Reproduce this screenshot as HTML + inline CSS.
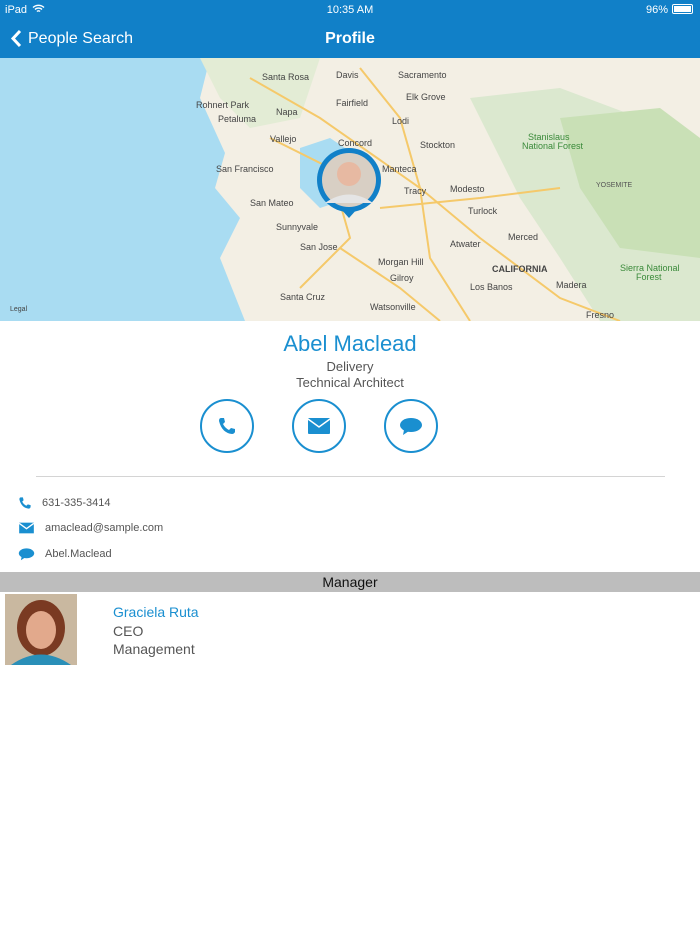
<!DOCTYPE html>
<html><head><meta charset="utf-8"><style>
*{margin:0;padding:0;box-sizing:border-box}
body{width:700px;height:933px;background:#fff;font-family:"Liberation Sans",sans-serif;position:relative;overflow:hidden}
.abs{position:absolute}
.bar{left:0;top:0;width:700px;height:58px;background:#1180c8;color:#fff}
.circ{width:54px;height:54px;border:2px solid #1a8fd0;border-radius:50%;top:399px;display:flex;align-items:center;justify-content:center}
.row{left:18px;font-size:11px;color:#555;display:flex;align-items:center}
.row svg{margin-right:10px}
</style></head><body>
<div class="abs bar">
 <div class="abs" style="left:5px;top:4px;font-size:11px">iPad</div>
 <svg class="abs" style="left:32px;top:4px" width="13" height="10" viewBox="0 0 13 10"><path d="M1 3.5a8 8 0 0 1 11 0M3 5.5a5 5 0 0 1 7 0M5 7.5a2 2 0 0 1 3 0" stroke="#fff" stroke-width="1.4" fill="none"/></svg>
 <div class="abs" style="left:0;width:700px;text-align:center;top:4px;font-size:11px">10:35 AM</div>
 <div class="abs" style="left:646px;top:4px;font-size:11px">96%</div>
 <div class="abs" style="left:672px;top:4px;width:21px;height:10px;border:1px solid #fff;border-radius:2px;padding:1px"><div style="background:#fff;width:100%;height:100%"></div></div>
 <svg class="abs" style="left:10px;top:29px" width="12" height="19" viewBox="0 0 12 19"><path d="M10 2L3 9.5 10 17" stroke="#fff" stroke-width="3" fill="none"/></svg>
 <div class="abs" style="left:28px;top:30px;font-size:16px">People Search</div>
 <div class="abs" style="left:0;width:700px;text-align:center;top:30px;font-size:16px;font-weight:bold">Profile</div>
</div>
<svg class="abs" style="left:0;top:58px" width="700" height="263" viewBox="0 0 700 263">
 <rect width="700" height="263" fill="#f3efe4"/>
 <path d="M0 0H210L200 40 225 95 215 130 240 160 220 200 245 263H0Z" fill="#a9dcf2"/>
 <path d="M300 90L330 80 360 100 350 140 320 150 300 130Z" fill="#a9dcf2"/>
 <path d="M470 40L560 30 640 60 700 100V263H600L560 200 520 140Z" fill="#dbe8cf"/>
 <path d="M560 60L660 50 700 80V200L620 190 580 130Z" fill="#c9e0b6"/>
 <path d="M200 0H320L300 60 250 70 220 40Z" fill="#e3ecd5"/>
 <g stroke="#f5c96a" stroke-width="2" fill="none">
 <path d="M250 20L320 60 420 130 480 180 560 240 620 263"/>
 <path d="M360 10L400 60 420 130 430 200 470 263"/>
 <path d="M270 80L330 110 350 180 300 230"/>
 <path d="M380 150L480 140 560 130"/>
 <path d="M340 190L400 230 440 263"/>
 </g>
 <g font-size="9" fill="#444" font-family="Liberation Sans">
 <text x="262" y="22">Santa Rosa</text><text x="336" y="20">Davis</text><text x="398" y="20">Sacramento</text>
 <text x="196" y="50">Rohnert Park</text><text x="276" y="57">Napa</text><text x="336" y="48">Fairfield</text><text x="406" y="42">Elk Grove</text>
 <text x="218" y="64">Petaluma</text><text x="270" y="84">Vallejo</text><text x="392" y="66">Lodi</text>
 <text x="338" y="88">Concord</text><text x="420" y="90">Stockton</text>
 <text x="216" y="114">San Francisco</text><text x="382" y="114">Manteca</text>
 <text x="404" y="136">Tracy</text><text x="450" y="134">Modesto</text>
 <text x="250" y="148">San Mateo</text><text x="468" y="156">Turlock</text>
 <text x="276" y="172">Sunnyvale</text><text x="300" y="192">San Jose</text>
 <text x="450" y="189">Atwater</text><text x="508" y="182">Merced</text>
 <text x="378" y="207">Morgan Hill</text><text x="492" y="214" font-weight="bold">CALIFORNIA</text>
 <text x="390" y="223">Gilroy</text><text x="470" y="232">Los Banos</text><text x="556" y="230">Madera</text>
 <text x="280" y="242">Santa Cruz</text><text x="370" y="252">Watsonville</text><text x="586" y="260">Fresno</text>
 <text x="10" y="253" font-size="7">Legal</text>
 <text x="528" y="82" fill="#3a8a3a">Stanislaus</text><text x="522" y="91" fill="#3a8a3a">National Forest</text>
 <text x="596" y="129" font-size="7" fill="#555">YOSEMITE</text>
 <text x="620" y="213" fill="#3a8a3a">Sierra National</text><text x="636" y="222" fill="#3a8a3a">Forest</text>
 </g>
 <circle cx="349" cy="122" r="32" fill="#1180c8"/>
 <path d="M340 150L349 160 358 150Z" fill="#1180c8"/>
 <circle cx="349" cy="122" r="27" fill="#d8cfc4"/>
 <circle cx="349" cy="116" r="12" fill="#e7b9a2"/>
 <path d="M325 145Q349 128 373 145" fill="#e5e5e5"/>
</svg>
<div class="abs" style="left:0;width:700px;text-align:center;top:331px;font-size:22px;color:#1a8fd0">Abel Maclead</div>
<div class="abs" style="left:0;width:700px;text-align:center;top:359px;font-size:13px;color:#555">Delivery</div>
<div class="abs" style="left:0;width:700px;text-align:center;top:375px;font-size:13px;color:#555">Technical Architect</div>
<div class="abs circ" style="left:200px"><svg width="20" height="20" viewBox="0 0 20 20"><path d="M4 2l3 0 1 4-2 2q2 4 6 6l2-2 4 1v3q-1 2-3 2Q5 17 2 5q0-3 2-3z" fill="#1a8fd0"/></svg></div>
<div class="abs circ" style="left:292px"><svg width="24" height="18" viewBox="0 0 24 18"><rect x="1" y="1" width="22" height="16" rx="1" fill="#1a8fd0"/><path d="M1 2l11 8 11-8" stroke="#fff" stroke-width="1.5" fill="none"/></svg></div>
<div class="abs circ" style="left:384px"><svg width="24" height="20" viewBox="0 0 24 20"><ellipse cx="12" cy="9" rx="11" ry="7" fill="#1a8fd0"/><path d="M5 14l-1 5 6-4z" fill="#1a8fd0"/></svg></div>
<div class="abs" style="left:36px;top:476px;width:629px;height:1px;background:#d4d4d4"></div>
<div class="abs row" style="top:496px"><svg width="14" height="14" viewBox="0 0 20 20"><path d="M4 2l3 0 1 4-2 2q2 4 6 6l2-2 4 1v3q-1 2-3 2Q5 17 2 5q0-3 2-3z" fill="#1a8fd0"/></svg><span style="margin-left:0">631-335-3414</span></div>
<div class="abs row" style="top:522px"><svg width="17" height="12" viewBox="0 0 24 18"><rect x="1" y="1" width="22" height="16" fill="#1a8fd0"/><path d="M1 2l11 8 11-8" stroke="#fff" stroke-width="2" fill="none"/></svg>amaclead@sample.com</div>
<div class="abs row" style="top:547px"><svg width="17" height="14" viewBox="0 0 24 20"><ellipse cx="12" cy="9" rx="11" ry="7" fill="#1a8fd0"/><path d="M5 14l-1 5 6-4z" fill="#1a8fd0"/></svg>Abel.Maclead</div>
<div class="abs" style="left:0;top:572px;width:700px;height:20px;background:#bdbdbd;text-align:center;font-size:14px;line-height:20px;color:#111">Manager</div>
<svg class="abs" style="left:5px;top:594px" width="72" height="71" viewBox="0 0 72 71"><rect width="72" height="71" fill="#c9b8a0"/><ellipse cx="36" cy="34" rx="24" ry="28" fill="#7a3a22"/><ellipse cx="36" cy="36" rx="15" ry="19" fill="#e2a98c"/><path d="M6 71Q36 50 66 71Z" fill="#2a8fb8"/></svg>
<div class="abs" style="left:113px;top:604px;font-size:14px;color:#1a8fd0">Graciela Ruta</div>
<div class="abs" style="left:113px;top:623px;font-size:14px;color:#555">CEO</div>
<div class="abs" style="left:113px;top:641px;font-size:14px;color:#555">Management</div>
</body></html>
